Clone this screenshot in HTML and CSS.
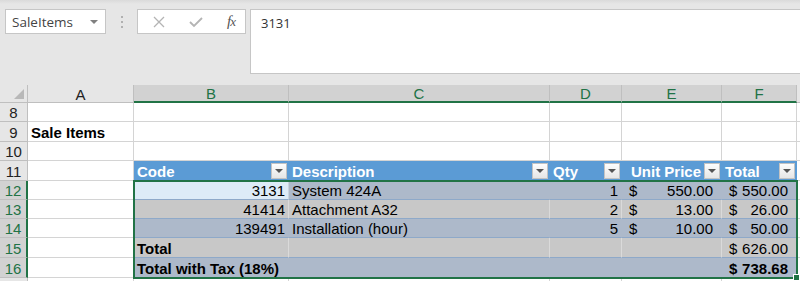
FILE: index.html
```html
<!DOCTYPE html>
<html lang="en">

<head>
    <meta charset="UTF-8">
    <meta name="viewport" content="width=device-width, initial-scale=1.0">
    <title>SaleItems</title>
    <link rel="stylesheet" href="styles.css">
</head>

<body>
    <div class="toolbar">
        <div class="name-box">
            <span>SaleItems</span>
            <span class="caret"></span>
        </div>
        <svg class="grip" width="4" height="14" viewBox="0 0 4 14">
            <rect x="1" y="1" width="2" height="2" fill="#b0b0b0" />
            <rect x="1" y="6" width="2" height="2" fill="#b0b0b0" />
            <rect x="1" y="11" width="2" height="2" fill="#b0b0b0" />
        </svg>
        <div class="fx-buttons">
            <svg width="12" height="12" viewBox="0 0 12 12">
                <path d="M1 1 L11 11 M11 1 L1 11" stroke="#b4b4b4" stroke-width="1.3" fill="none" />
            </svg>
            <svg width="14" height="12" viewBox="0 0 14 12">
                <path d="M1 6 L5 10 L13 2" stroke="#b4b4b4" stroke-width="1.8" fill="none" />
            </svg>
            <span class="fx"><i>f</i><i class="fx-x">x</i></span>
        </div>
        <div class="formula">3131</div>
    </div>

    <div class="sheet">
        <div class="row col-head">
            <div class="rh corner">
                <svg width="10" height="10" viewBox="0 0 10 10">
                    <polygon points="10,0 10,10 0,10" fill="#b8b8b8" />
                </svg>
            </div>
            <div class="ca">A</div>
            <div class="cb sel">B</div>
            <div class="cc sel">C</div>
            <div class="cd sel">D</div>
            <div class="ce sel">E</div>
            <div class="cf sel">F</div>
            <div class="cg"></div>
        </div>

        <div class="row">
            <div class="rh">8</div>
            <div class="ca"></div><div class="cb"></div><div class="cc"></div>
            <div class="cd"></div><div class="ce"></div><div class="cf"></div><div class="cg"></div>
        </div>
        <div class="row tall">
            <div class="rh">9</div>
            <div class="ca bold">Sale Items</div><div class="cb"></div><div class="cc"></div>
            <div class="cd"></div><div class="ce"></div><div class="cf"></div><div class="cg"></div>
        </div>
        <div class="row">
            <div class="rh">10</div>
            <div class="ca"></div><div class="cb"></div><div class="cc"></div>
            <div class="cd"></div><div class="ce"></div><div class="cf"></div><div class="cg"></div>
        </div>

        <!-- table header -->
        <div class="row tall">
            <div class="rh">11</div>
            <div class="ca"></div>
            <div class="cb th"><span class="label">Code</span><span class="dd"></span></div>
            <div class="cc th"><span class="label">Description</span><span class="dd"></span></div>
            <div class="cd th"><span class="label">Qty</span><span class="dd"></span></div>
            <div class="ce th"><span class="label right">Unit Price</span><span class="dd"></span></div>
            <div class="cf th"><span class="label">Total</span><span class="dd"></span></div>
            <div class="cg"></div>
        </div>

        <div class="row">
            <div class="rh sel">12</div>
            <div class="ca"></div>
            <div class="cb td active num">3131</div>
            <div class="cc td band">System 424A</div>
            <div class="cd td band num">1</div>
            <div class="ce td band acct"><span>$</span><span>550.00</span></div>
            <div class="cf td band acct"><span>$</span><span>550.00</span></div>
            <div class="cg"></div>
        </div>
        <div class="row">
            <div class="rh sel">13</div>
            <div class="ca"></div>
            <div class="cb td plain num">41414</div>
            <div class="cc td plain">Attachment A32</div>
            <div class="cd td plain num">2</div>
            <div class="ce td plain acct"><span>$</span><span>13.00</span></div>
            <div class="cf td plain acct"><span>$</span><span>26.00</span></div>
            <div class="cg"></div>
        </div>
        <div class="row">
            <div class="rh sel">14</div>
            <div class="ca"></div>
            <div class="cb td band num">139491</div>
            <div class="cc td band">Installation (hour)</div>
            <div class="cd td band num">5</div>
            <div class="ce td band acct"><span>$</span><span>10.00</span></div>
            <div class="cf td band acct"><span>$</span><span>50.00</span></div>
            <div class="cg"></div>
        </div>
        <div class="row tall">
            <div class="rh sel">15</div>
            <div class="ca"></div>
            <div class="cb td plain bold">Total</div>
            <div class="cc td plain"></div>
            <div class="cd td plain"></div>
            <div class="ce td plain"></div>
            <div class="cf td plain acct"><span>$</span><span>626.00</span></div>
            <div class="cg"></div>
        </div>
        <div class="row tall">
            <div class="rh sel">16</div>
            <div class="ca"></div>
            <div class="cb td band bold">Total with Tax (18%)</div>
            <div class="cc td band"></div>
            <div class="cd td band"></div>
            <div class="ce td band"></div>
            <div class="cf td band acct bold"><span>$</span><span>738.68</span></div>
            <div class="cg"></div>
        </div>
        <div class="row">
            <div class="rh"></div>
            <div class="ca"></div><div class="cb"></div><div class="cc"></div>
            <div class="cd"></div><div class="ce"></div><div class="cf"></div><div class="cg"></div>
        </div>

        <!-- selected range B12:F16 -->
        <div class="selection">
            <div class="handle"></div>
        </div>
    </div>
</body>

</html>
```

FILE: styles.css
```css
body {
    margin: 0;
    padding: 0;
    width: 800px;
    height: 281px;
    overflow: hidden;
    background-color: #fff;
    font-family: "Liberation Sans", Arial, sans-serif;
    color: #000;
}

/* formula bar */

.toolbar {
    height: 85px;
    box-sizing: border-box;
    padding: 9px 0 0 5px;
    display: flex;
    align-items: flex-start;
    background: linear-gradient(#dadada 0, #e6e6e6 4px);
    font-family: "Open Sans", "Noto Sans", sans-serif;
}

.name-box {
    width: 101px;
    height: 25px;
    box-sizing: border-box;
    border: 1px solid #c6c6c6;
    background-color: #fff;
    display: flex;
    align-items: center;
    justify-content: space-between;
    padding: 0 7px 0 6px;
    font-size: 13.5px;
    color: #444;
}

.caret {
    width: 0;
    height: 0;
    border-left: 4px solid transparent;
    border-right: 4px solid transparent;
    border-top: 4px solid #808080;
}

.grip {
    margin: 6px 13px 0 14px;
}

.fx-buttons {
    width: 109px;
    height: 25px;
    box-sizing: border-box;
    border: 1px solid #c6c6c6;
    background-color: #fff;
    display: flex;
    align-items: center;
    justify-content: space-between;
    padding: 0 10px 0 15px;
}

.fx {
    font-family: "Liberation Serif", serif;
    font-size: 15px;
    color: #555;
    letter-spacing: -1px;
}

.fx-x {
    font-size: 13px;
}

.formula {
    flex: 1;
    margin-left: 4px;
    height: 65px;
    box-sizing: border-box;
    border: 1px solid #c6c6c6;
    border-right: none;
    background-color: #fff;
    padding: 4px 10px;
    font-size: 13px;
    color: #333;
}

/* grid */

.sheet {
    position: relative;
}

.row {
    display: flex;
    height: 19px;
}

.row.tall {
    height: 20px;
}

.row > div {
    flex-shrink: 0;
    box-sizing: border-box;
    border-right: 1px solid #d4d4d4;
    border-bottom: 1px solid #d4d4d4;
    display: flex;
    align-items: center;
    padding: 1px 3px 0 3px;
    font-size: 15px;
    white-space: nowrap;
    overflow: hidden;
}

.rh { width: 28px; }
.ca { width: 106px; }
.cb { width: 155px; }
.cc { width: 261px; }
.cd { width: 72px; }
.ce { width: 100px; }
.cf { width: 75px; }

.row > .cg {
    flex: 1 1 0;
    padding: 0;
    border-right: none;
}

.row > .rh {
    background-color: #e6e6e6;
    border-color: #bfbfbf;
    justify-content: center;
    padding: 1px 0 0 0;
    color: #222;
}

.row > .rh.sel {
    background-color: #d2d2d2;
    color: #217346;
    border-right: 2px solid #217346;
}

.col-head {
    height: 18px;
}

.col-head > div {
    background-color: #e6e6e6;
    border-color: #bfbfbf !important;
    justify-content: center;
    color: #222;
}

.col-head > .sel {
    background-color: #d2d2d2;
    color: #217346;
    border-bottom: 2px solid #217346 !important;
}

.col-head > .corner {
    justify-content: flex-end;
    align-items: flex-end;
    padding: 0 3px 3px 0;
}

.bold {
    font-weight: bold;
}

/* table */

.th {
    background-color: #5b9bd5;
    border-right-color: #5b9bd5 !important;
    border-bottom-color: #5b9bd5 !important;
    color: #fff;
    font-weight: bold;
    padding-right: 1px !important;
}

.label {
    flex: 1;
}

.label.right {
    text-align: right;
    padding-right: 3px;
}

.dd {
    width: 16px;
    height: 16px;
    box-sizing: border-box;
    border: 1px solid #c3c3c3;
    background: linear-gradient(#fdfdfd, #e6e6e6);
    display: flex;
    align-items: center;
    justify-content: center;
}

.dd::after {
    content: "";
    border-left: 4px solid transparent;
    border-right: 4px solid transparent;
    border-top: 4px solid #555;
}

.td {
    border-bottom-color: #8ea9c9 !important;
}

.band {
    background-color: #adb9ca;
    border-right-color: #adb9ca !important;
}

.plain {
    background-color: #c8c8c8;
    border-right-color: #dadada !important;
}

.active {
    background-color: #ddebf7;
    border-right-color: #c9d3de !important;
}

.num {
    justify-content: flex-end;
}

.acct {
    justify-content: space-between;
    padding: 1px 8px 0 7px !important;
}

.selection {
    position: absolute;
    left: 133px;
    top: 95px;
    width: 665px;
    height: 99px;
    box-sizing: border-box;
    border: 2px solid #217346;
    pointer-events: none;
}

.handle {
    position: absolute;
    right: -4px;
    bottom: -4px;
    width: 5px;
    height: 5px;
    background-color: #217346;
    border: 1px solid #fff;
}
```
